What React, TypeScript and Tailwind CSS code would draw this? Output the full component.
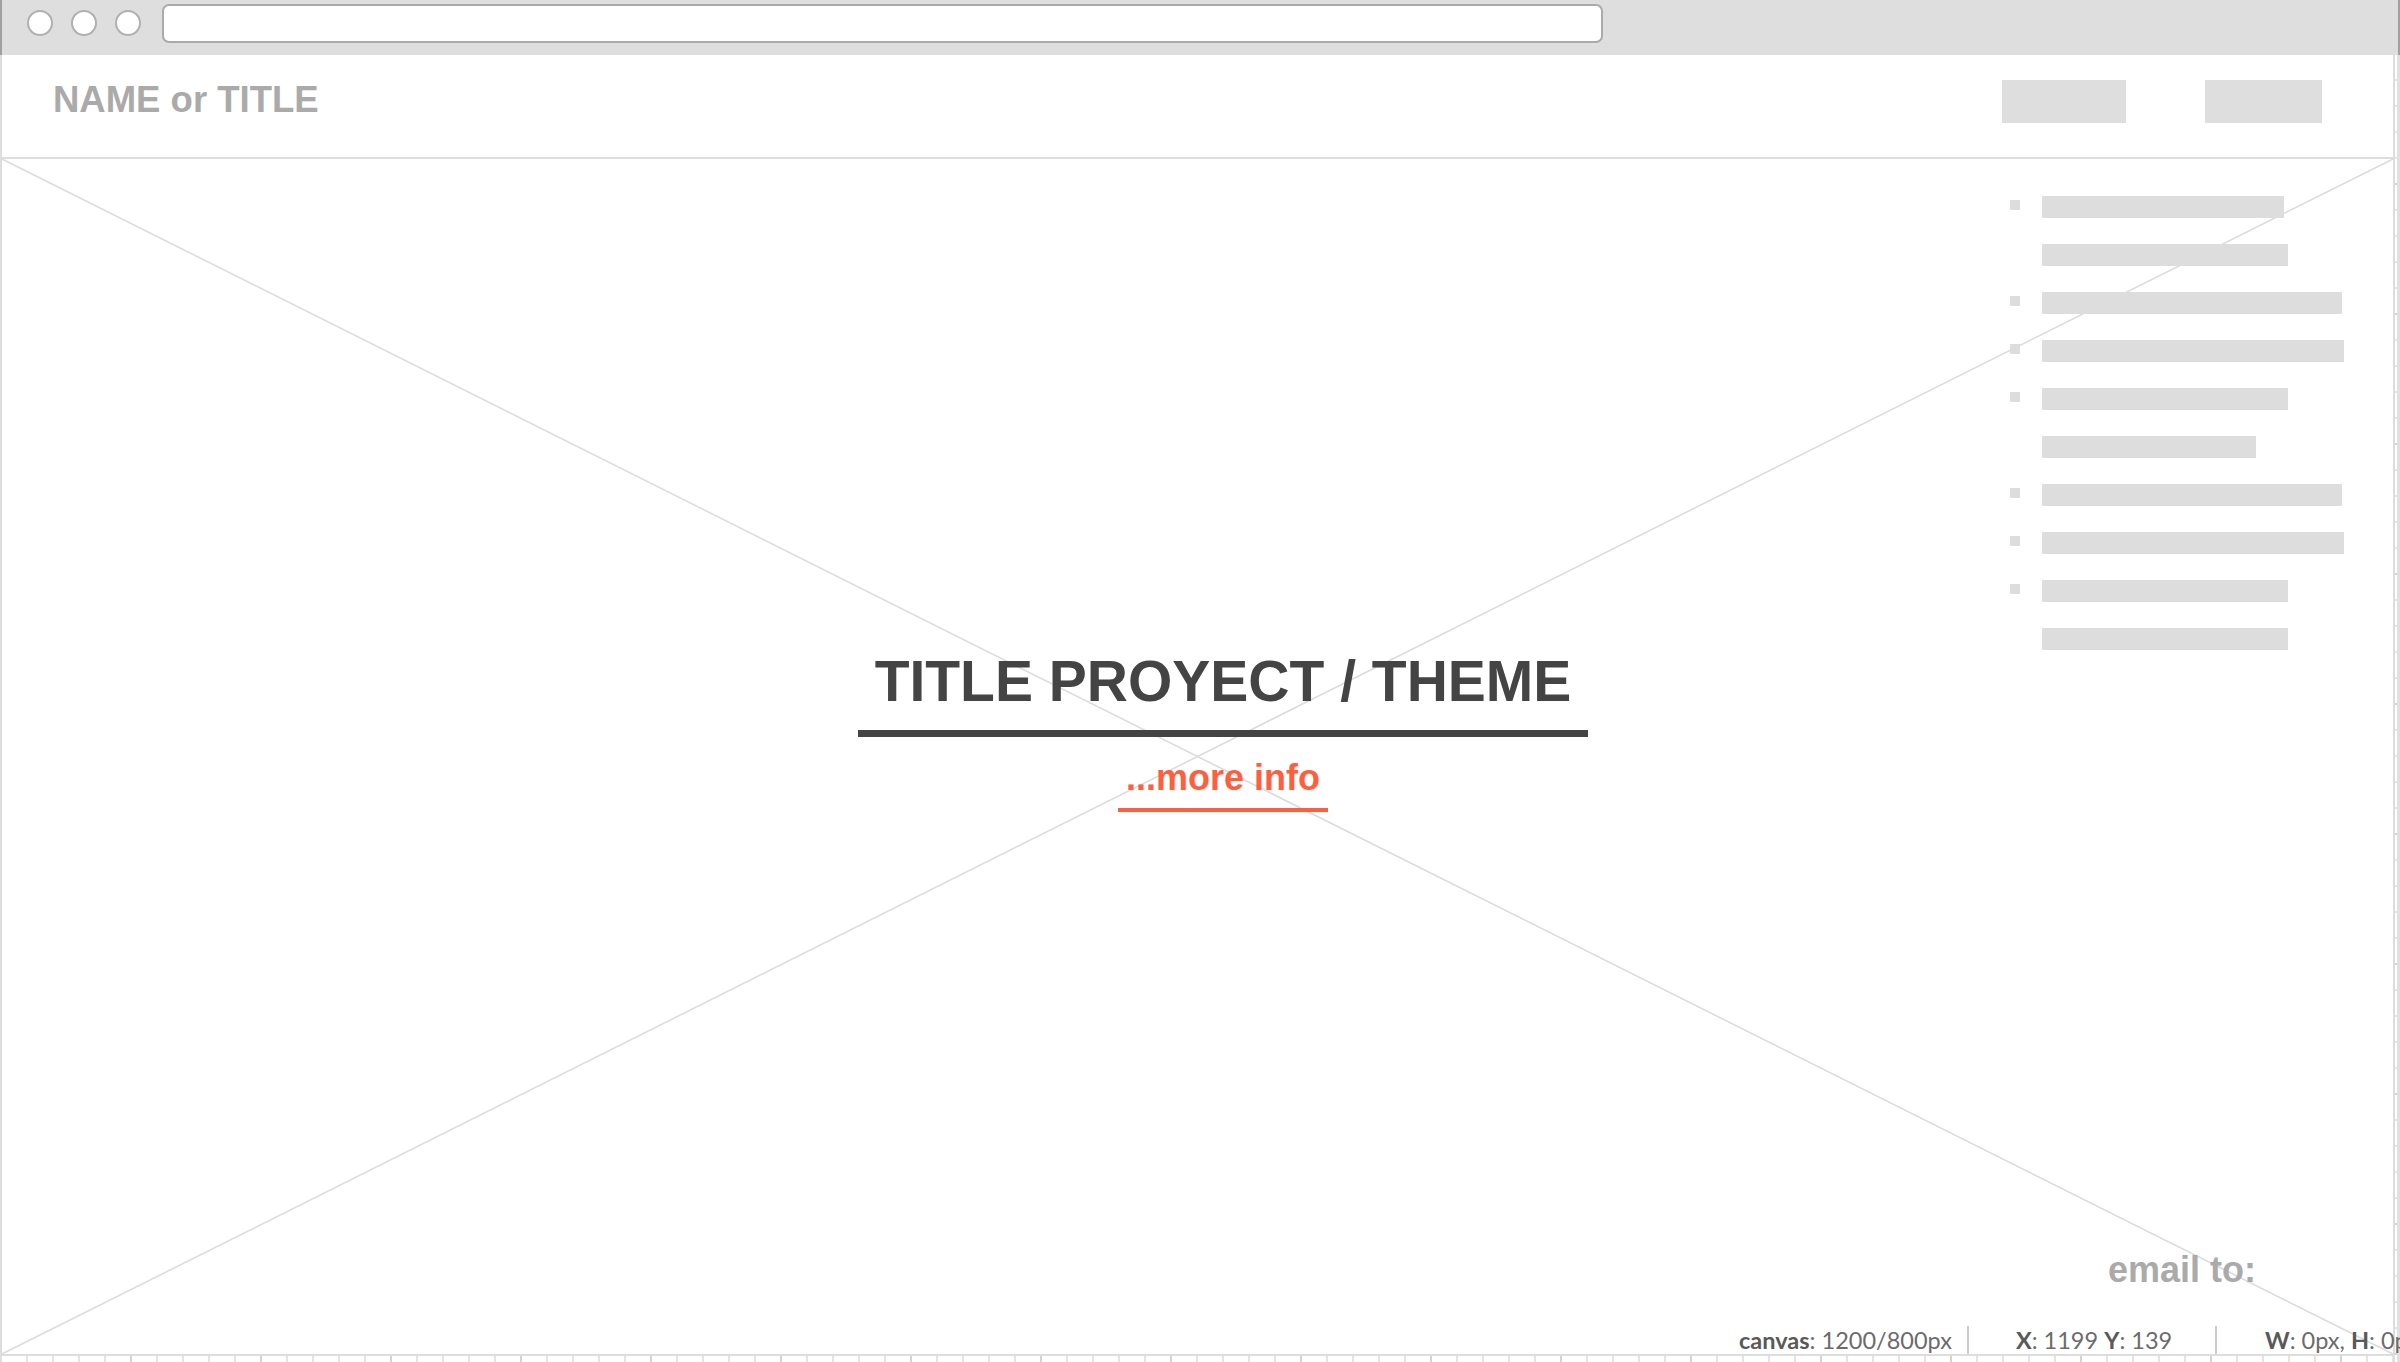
import React from "react";

const rows: { w: string; bullet: boolean }[] = [
  { w: "w-[242px]", bullet: true },
  { w: "w-[246px]", bullet: false },
  { w: "w-[300px]", bullet: true },
  { w: "w-[302px]", bullet: true },
  { w: "w-[246px]", bullet: true },
  { w: "w-[214px]", bullet: false },
  { w: "w-[300px]", bullet: true },
  { w: "w-[302px]", bullet: true },
  { w: "w-[246px]", bullet: true },
  { w: "w-[246px]", bullet: false },
];

function Circle() {
  return <div className="mt-[10px] w-[26px] h-[26px] rounded-full border-2 border-[#b0b0b0] bg-white shrink-0" />;
}

export default function App() {
  return (
    <div className="relative w-[2400px] h-[1362px] overflow-hidden bg-white flex flex-col font-['Liberation_Sans',Arial,sans-serif]">
      {/* browser chrome */}
      <div className="h-[55px] shrink-0 bg-[#dedede] border-l-2 border-r-2 border-[#a0a0a0] flex items-start pl-[25px] gap-[18px]">
        <Circle />
        <Circle />
        <Circle />
        <div className="ml-[3px] mt-[4px] w-[1441px] h-[39px] rounded-[7px] border-2 border-[#aaaaaa] bg-white shrink-0" />
      </div>

      <div className="flex-1 min-h-0 flex">
        <div className="flex-1 min-w-0 flex flex-col border-l-2 border-[#dddddd]">
          {/* header */}
          <div className="h-[104px] shrink-0 border-b-2 border-[#dddddd] flex items-start pt-[25px] pl-[51px] pr-[71px]">
            <div className="mt-[2px] text-[36.5px] leading-none font-bold text-[#aaaaaa]">NAME or TITLE</div>
            <div className="ml-auto flex gap-[79px]">
              <div className="w-[124px] h-[43px] bg-[#dedede]" />
              <div className="w-[117px] h-[43px] bg-[#dedede]" />
            </div>
          </div>

          {/* main image placeholder */}
          <div className="flex-1 min-h-0 grid grid-cols-1 grid-rows-1">
            <svg
              className="col-start-1 row-start-1 w-full h-full"
              viewBox="0 0 100 100"
              preserveAspectRatio="none"
            >
              <line x1="0" y1="0" x2="100" y2="100" stroke="#dcdcdc" strokeWidth="1.6" vectorEffect="non-scaling-stroke" />
              <line x1="100" y1="0" x2="0" y2="100" stroke="#dcdcdc" strokeWidth="1.6" vectorEffect="non-scaling-stroke" />
            </svg>

            <div className="col-start-1 row-start-1 justify-self-end self-start w-[383px] mt-[37px] flex flex-col gap-[26px]">
              {rows.map((r, i) => (
                <div key={i} className="flex items-start h-[22px]">
                  <div className={"mt-[4px] w-[10px] h-[10px] shrink-0 " + (r.bullet ? "bg-[#dddddd]" : "bg-transparent")} />
                  <div className={"ml-[22px] h-[22px] bg-[#dddddd] " + r.w} />
                </div>
              ))}
            </div>

            <div className="col-start-1 row-start-1 self-start flex flex-col items-center pl-[51px] pt-[494px]">
              <div className="text-[57px] leading-none font-bold text-[#444444] whitespace-nowrap">TITLE PROYECT / THEME</div>
              <div className="mt-[20px] w-[730px] h-[7px] bg-[#444444]" />
              <div className="mt-[23px] text-[36px] leading-none font-bold text-[#fe5f3f] whitespace-nowrap">...more info</div>
              <div className="mt-[12px] w-[210px] h-[4px] bg-[#fe5f3f]" />
            </div>

            <div className="col-start-1 row-start-1 justify-self-end self-end mr-[137px] mb-[66px] text-[36px] leading-none font-bold text-[#aaaaaa]">
              email to:
            </div>
          </div>

          {/* bottom ruler */}
          <svg className="h-[8px] w-full shrink-0 block">
            <defs>
              <pattern id="hticks" x="0" y="0" width="130" height="8" patternUnits="userSpaceOnUse">
                <rect x="24" y="2" width="2" height="6" fill="#e4e4e4" />
                <rect x="50" y="2" width="2" height="6" fill="#e4e4e4" />
                <rect x="76" y="2" width="2" height="6" fill="#e4e4e4" />
                <rect x="102" y="2" width="2" height="6" fill="#e4e4e4" />
                <rect x="128" y="2" width="2" height="6" fill="#d2d2d2" />
              </pattern>
            </defs>
            <rect x="0" y="0" width="100%" height="2" fill="#dddddd" />
            <rect x="0" y="2" width="100%" height="6" fill="url(#hticks)" />
          </svg>
        </div>

        {/* right ruler */}
        <svg className="w-[7px] h-full shrink-0 block">
          <defs>
            <pattern id="vticks" x="0" y="0" width="7" height="130" patternUnits="userSpaceOnUse">
              <rect x="2" y="24" width="3" height="2" fill="#e4e4e4" />
              <rect x="2" y="50" width="3" height="2" fill="#e4e4e4" />
              <rect x="2" y="76" width="3" height="2" fill="#e4e4e4" />
              <rect x="2" y="102" width="3" height="2" fill="#e4e4e4" />
              <rect x="2" y="128" width="3" height="2" fill="#d2d2d2" />
            </pattern>
          </defs>
          <rect x="0" y="0" width="2" height="100%" fill="#dddddd" />
          <rect x="0" y="0" width="7" height="100%" fill="url(#vticks)" />
          <rect x="4" y="0" width="3" height="100%" fill="#e0e0e0" />
        </svg>
      </div>

      {/* status bar overlay */}
      <div className="absolute left-[1739px] top-[1326px] h-[28px] flex items-start whitespace-nowrap font-['Lato',sans-serif] text-[23.5px] leading-none text-[#6b6b6b]">
        <div className="mt-[3px] pr-[15px]">
          <span className="font-bold text-[#595959]">canvas</span>: 1200/800px
        </div>
        <div className="w-[2px] h-[28px] bg-[#cccccc]" />
        <div className="mt-[3px] w-[246px] pl-[47px]">
          <span className="font-bold text-[#595959]">X</span>: 1199 <span className="font-bold text-[#595959]">Y</span>: 139
        </div>
        <div className="w-[2px] h-[28px] bg-[#cccccc]" />
        <div className="mt-[3px] pl-[48px]">
          <span className="font-bold text-[#595959]">W</span>: 0px, <span className="font-bold text-[#595959]">H</span>: 0px
        </div>
      </div>
    </div>
  );
}
